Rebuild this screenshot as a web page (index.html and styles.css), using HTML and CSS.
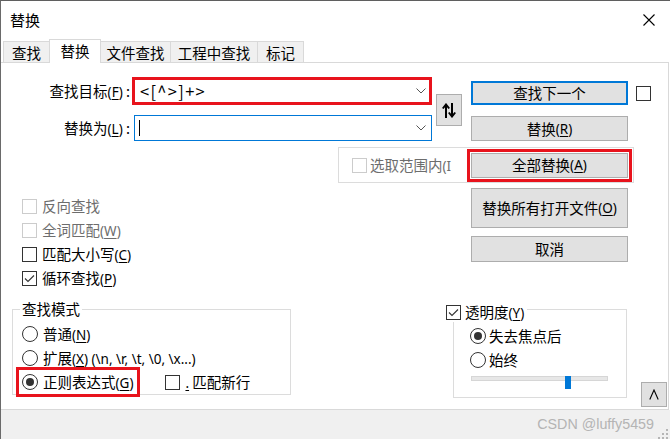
FILE: index.html
```html
<!DOCTYPE html>
<html lang="zh-CN">
<head>
<meta charset="utf-8">
<title>替换</title>
<link rel="stylesheet" href="styles.css">
</head>
<body>
<div class="win">
  <div class="titlebar">
    <span class="title">替换</span>
    <svg class="close" width="12" height="12" viewBox="0 0 12 12"><path d="M0.5 0.5L11.5 11.5M11.5 0.5L0.5 11.5" stroke="#000" stroke-width="1.1" fill="none"/></svg>
  </div>
  <div class="tabs">
    <div class="tab t1">查找</div>
    <div class="tab t2 sel">替换</div>
    <div class="tab t3">文件查找</div>
    <div class="tab t4">工程中查找</div>
    <div class="tab t5">标记</div>
  </div>
  <div class="panel">
    <div class="rowA">
      <div class="fields">
        <label class="lbl">查找目标<span class="mn">(<u>F</u>)</span> :</label>
        <div class="combo combo1"><span class="val">&lt;[^&gt;]+&gt;</span><svg class="chev" width="10" height="6" viewBox="0 0 10 6"><path d="M0.5 0.5L5 5L9.5 0.5" stroke="#555" fill="none"/></svg></div>
        <label class="lbl">替换为<span class="mn">(<u>L</u>)</span> :</label>
        <div class="combo combo2"><span class="caret"></span><svg class="chev" width="10" height="6" viewBox="0 0 10 6"><path d="M0.5 0.5L5 5L9.5 0.5" stroke="#555" fill="none"/></svg></div>
      </div>
      <div class="btn swap"><svg width="14" height="15" viewBox="0 0 14 15"><path d="M4 15V2.5M0.8 5.5L4 1.5L7.2 5.5M10 0V12.5M6.8 9.5L10 13.5L13.2 9.5" stroke="#000" stroke-width="2" fill="none"/></svg></div>
      <div class="btncol">
        <div class="btn btn-find">查找下一个</div>
        <div class="btn btn-rep">替换<span class="mn">(<u>R</u>)</span></div>
      </div>
      <span class="cb cb-top"></span>
    </div>
    <div class="rowB">
      <span class="cb dis"></span>
      <span class="sel-text">选取范围内<span class="mn">(I</span></span>
      <div class="btn btn-repall">全部替换<span class="mn">(<u>A</u>)</span></div>
    </div>
    <div class="rowC">
      <div class="opts">
        <div class="opt dis"><span class="cb dis"></span><span class="txt">反向查找</span></div>
        <div class="opt dis"><span class="cb dis"></span><span class="txt">全词匹配<span class="mn">(<u>W</u>)</span></span></div>
        <div class="opt"><span class="cb"></span><span class="txt">匹配大小写<span class="mn">(<u>C</u>)</span></span></div>
        <div class="opt"><span class="cb"><svg width="13" height="13" viewBox="0 0 13 13"><path d="M2 6.5L5 9.5L11 3.5" stroke="#333" stroke-width="1.1" fill="none"/></svg></span><span class="txt">循环查找<span class="mn">(<u>P</u>)</span></span></div>
      </div>
      <div class="btncol">
        <div class="btn btn-all">替换所有打开文件<span class="mn">(<u>O</u>)</span></div>
        <div class="btn btn-cancel">取消</div>
      </div>
    </div>
    <div class="rowD">
      <div class="group g1">
        <div class="legend">查找模式</div>
        <div class="opt first"><span class="rb"></span><span class="txt">普通<span class="mn">(<u>N</u>)</span></span></div>
        <div class="opt"><span class="rb"></span><span class="txt">扩展<span class="mn">(<u>X</u>) (\n, \r, \t, \0, \x...)</span></span></div>
        <div class="opt">
          <span class="rx"><span class="rb on"></span><span class="txt">正则表达式<span class="mn">(<u>G</u>)</span></span></span>
          <span class="cb cb-nl"></span><span class="txt nl"><span class="mn"><u>.</u></span> 匹配新行</span>
        </div>
      </div>
      <div class="group g2">
        <div class="legend legend2"><span class="cb"><svg width="13" height="13" viewBox="0 0 13 13"><path d="M2 6.5L5 9.5L11 3.5" stroke="#333" stroke-width="1.1" fill="none"/></svg></span><span class="txt">透明度<span class="mn">(<u>Y</u>)</span></span></div>
        <div class="opt first2"><span class="rb on"></span><span class="txt">失去焦点后</span></div>
        <div class="opt"><span class="rb"></span><span class="txt">始终</span></div>
        <div class="slider"><div class="track"></div><div class="thumb"></div></div>
      </div>
      <div class="btn up"><svg width="10" height="11" viewBox="0 0 10 11"><path d="M0.8 10.5L5 1L9.2 10.5" stroke="#000" stroke-width="1.1" fill="none"/></svg></div>
    </div>
  </div>
  <div class="footer">
    <span class="wm">CSDN @luffy5459</span>
    <svg class="grip" width="11" height="10" viewBox="0 0 11 10"><g fill="#b5b5b5"><rect x="8" y="0" width="2" height="2"/><rect x="4" y="4" width="2" height="2"/><rect x="8" y="4" width="2" height="2"/><rect x="0" y="8" width="2" height="2"/><rect x="4" y="8" width="2" height="2"/><rect x="8" y="8" width="2" height="2"/></g></svg>
  </div>
</div>
</body>
</html>
```
FILE: styles.css
```css
* { box-sizing: border-box; }
html, body { margin: 0; padding: 0; }
body {
  width: 670px; height: 439px; overflow: hidden; background: #fff;
  font-family: "Noto Sans CJK SC", "Noto Sans", sans-serif;
  font-size: 14.5px; color: #000;
}
.win {
  width: 670px; height: 439px;
  border-top: 1px solid #5f5f5f; border-left: 1px solid #6a6a6a;
  display: flex; flex-direction: column;
}
.titlebar {
  height: 38px; flex: none;
  display: flex; align-items: center; justify-content: space-between;
  padding: 0 15px 0 9px;
}
.title { font-size: 15px; line-height: 20px; }
.mn { font-family: "Noto Sans", "Liberation Sans", sans-serif; font-size: 13.5px; }
.mn u { text-underline-offset: 2px; }

.tabs { height: 23px; flex: none; display: flex; align-items: flex-end; padding-left: 2px; }
.tab {
  height: 21px; border: 1px solid #d9d9d9; border-bottom: 0; background: #f0f0f0;
  display: flex; align-items: center; justify-content: center; line-height: 19px;
  margin-left: -1px;
}
.t1 { width: 47px; margin-left: 0; }
.t2 { width: 52px; }
.t3 { width: 71px; }
.t4 { width: 88px; }
.t5 { width: 47px; }
.tab.sel {
  height: 24px; margin-bottom: -1px; background: #fff; position: relative; z-index: 1;
  padding-bottom: 3px;
}

.panel {
  flex: none; height: 348px; width: 668px;
  border-top: 1px solid #d9d9d9; border-right: 1px solid #d9d9d9; border-bottom: 1px solid #d9d9d9;
}

.rowA { display: flex; align-items: flex-start; margin-top: 14px; }
.fields { display: grid; grid-template-columns: 131px auto; row-gap: 10px; align-items: center; }
.lbl { text-align: right; padding-right: 2px; line-height: 20px; white-space: nowrap; }
.combo { display: flex; align-items: center; justify-content: space-between; background: #fff; }
.combo1 { width: 300px; height: 28px; border: 3px solid #e8131c; padding: 0 3px 0 5px; }
.combo2 { width: 298px; height: 26px; margin-left: 2px; border: 1px solid #0078d7; padding: 0 5px 0 4px; }
.val { font-size: 16.5px; line-height: 20px; letter-spacing: 1.3px; }
.caret { width: 1px; height: 16px; background: #000; }

.btn {
  background: #e1e1e1; border: 1px solid #adadad;
  display: flex; align-items: center; justify-content: center; line-height: 20px; white-space: nowrap;
}
.swap { width: 26px; height: 32px; margin-left: 4px; align-self: center; margin-top: 2px; }
.btncol { width: 157px; margin-left: 9px; display: flex; flex-direction: column; }
.btn-find { height: 24px; margin-top: 4px; border: 2px solid #0078d7; }
.btn-rep { height: 25px; margin-top: 11px; }

.cb {
  width: 15px; height: 15px; flex: none; border: 1px solid #333; background: #fff;
  display: inline-flex; align-items: center; justify-content: center;
}
.cb.dis { border-color: #cccccc; }
.cb-top { margin-left: 8px; margin-top: 9px; }

.rowB {
  margin-top: 6px; margin-left: 337px; width: 296px; height: 36px;
  border: 1px solid #dcdcdc; display: flex; align-items: center; padding-left: 13px;
}
.sel-text { margin-left: 3px; width: 85px; white-space: nowrap; color: #6d6d6d; line-height: 20px; }
.btn-repall { width: 157px; height: 25px; margin-left: 16px; outline: 3px solid #e8131c; outline-offset: 1px; }

.rowC { display: flex; margin-top: 5px; }
.opts { margin-left: 21px; margin-top: 6px; width: 428px; }
.opt { height: 24px; display: flex; align-items: center; }
.opt .txt { margin-left: 5px; line-height: 20px; white-space: nowrap; }
.opt.dis .txt { color: #6d6d6d; }
.rowC .btncol { margin-left: 21px; }
.btn-all { height: 40px; }
.btn-cancel { height: 26px; margin-top: 8px; }

.rowD { display: flex; align-items: flex-start; margin-top: 19px; }
.group { border: 1px solid #dcdcdc; }
.g1 { margin-left: 11px; width: 279px; padding-left: 9px; }
.legend {
  width: fit-content; margin-top: -10px; margin-left: -2px; padding: 0 2px;
  line-height: 18px; background: #fff; white-space: nowrap;
}
.g1 .first { margin-top: 4px; }
.rb {
  width: 16px; height: 16px; flex: none; border: 1px solid #333; border-radius: 50%; background: #fff;
  display: inline-flex; align-items: center; justify-content: center;
}
.rb.on::after { content: ""; width: 8px; height: 8px; border-radius: 50%; background: #333; }
.rx {
  display: inline-flex; align-items: center; height: 24px;
  margin-left: -3px; padding: 0 4px 0 3px;
  outline: 3px solid #e8131c;
}
.cb-nl { margin-left: 28px; }
.nl { margin-left: 4px; }

.g2 { margin-left: 162px; width: 174px; padding: 0 0 7px 16px; }
.legend2 { margin-top: -7px; margin-left: -24px; display: flex; align-items: center; padding: 0 3px 0 0; }
.legend2 .txt { margin-left: 4px; }
.g2 .first2 { margin-top: 2px; }
.g2 .opt .txt { margin-left: 3px; }
.slider { position: relative; width: 137px; height: 14px; margin: 2px 0 0 1px; }
.track { margin-top: 4px; height: 5px; background: #e7e7e7; border: 1px solid #d6d6d6; }
.thumb { position: absolute; left: 94px; top: 0; width: 6px; height: 13px; background: #0078d7; }

.up { width: 26px; height: 25px; margin-left: 14px; margin-top: 73px; }

.footer {
  flex: none; height: 29px; background: #f0f0f0;
  display: flex; align-items: center; justify-content: flex-end; padding-right: 1px;
}
.wm { font-family: "Liberation Sans", Arial, sans-serif; font-size: 14.3px; color: #b4b4b4; margin-top: -1px; }
.grip { align-self: flex-end; margin-left: 4px; margin-bottom: 0; }
```
